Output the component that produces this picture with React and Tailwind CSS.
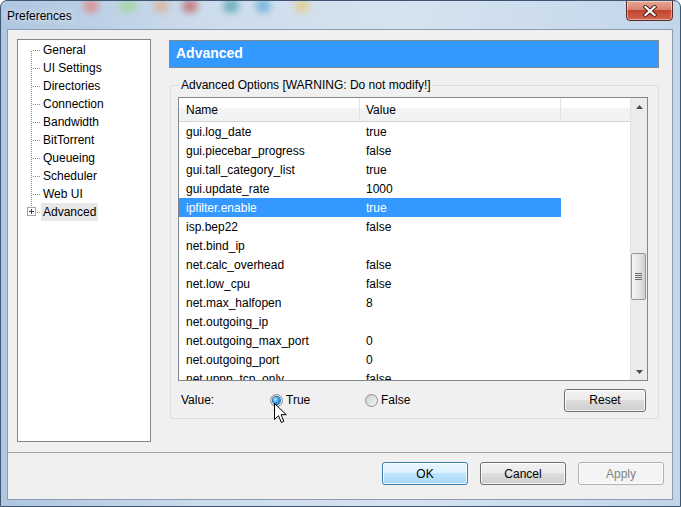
import React from 'react';

const pages = [
    'General',
    'UI Settings',
    'Directories',
    'Connection',
    'Bandwidth',
    'BitTorrent',
    'Queueing',
    'Scheduler',
    'Web UI',
    'Advanced',
];

const settings = [
    ['gui.log_date', 'true'],
    ['gui.piecebar_progress', 'false'],
    ['gui.tall_category_list', 'true'],
    ['gui.update_rate', '1000'],
    ['ipfilter.enable', 'true'],
    ['isp.bep22', 'false'],
    ['net.bind_ip', ''],
    ['net.calc_overhead', 'false'],
    ['net.low_cpu', 'false'],
    ['net.max_halfopen', '8'],
    ['net.outgoing_ip', ''],
    ['net.outgoing_max_port', '0'],
    ['net.outgoing_port', '0'],
    ['net.upnp_tcp_only', 'false'],
];

// blurred taskbar shapes showing through the glass frame
const glassSpots = [
    { left: 82, color: '#e08c8c' },
    { left: 119, color: '#9fd99a' },
    { left: 152, color: '#d9b49c' },
    { left: 181, color: '#c46f72' },
    { left: 222, color: '#5fa8b5' },
    { left: 254, color: '#6fb0dc' },
    { left: 293, color: '#e4cf8e' },
];

function TreeLines({ first, last }) {
    return (
        <svg width="23" height="18" className="shrink-0">
            {!last && (
                <line x1="13.5" y1={first ? 10 : 0} x2="13.5" y2="18" stroke="#8c8c8c" strokeDasharray="1 1" />
            )}
            {last ? (
                <>
                    <line x1="13.5" y1="0" x2="13.5" y2="4" stroke="#8c8c8c" strokeDasharray="1 1" />
                    <rect x="9.5" y="4.5" width="8" height="8" fill="#fff" stroke="#a6a6a6" />
                    <line x1="11" y1="8.5" x2="16" y2="8.5" stroke="#3b3b3b" />
                    <line x1="13.5" y1="6" x2="13.5" y2="11" stroke="#3b3b3b" />
                    <line x1="19" y1="9.5" x2="23" y2="9.5" stroke="#8c8c8c" strokeDasharray="1 1" />
                </>
            ) : (
                <line x1="15" y1="9.5" x2="23" y2="9.5" stroke="#8c8c8c" strokeDasharray="1 1" />
            )}
        </svg>
    );
}

function Radio({ checked }) {
    return (
        <span className="w-[13px] h-[13px] rounded-full border border-[#8e8f8f] bg-[linear-gradient(135deg,#cfcfcf,#f6f6f6)] flex items-center justify-center shrink-0">
            {checked && (
                <span className="w-[7px] h-[7px] rounded-full bg-[radial-gradient(circle_at_35%_35%,#b6ecff,#2590de_55%,#0f5aa8)] shadow-[0_0_0_1px_#1c6cb5]" />
            )}
        </span>
    );
}

function WinButton({ children, variant = 'normal', className = '' }) {
    const styles = {
        normal: 'border-[#707070] bg-[linear-gradient(#f2f2f2_0%,#ebebeb_50%,#dddddd_50%,#cfcfcf_100%)] text-black',
        focused: 'border-[#3c7fb1] bg-[linear-gradient(#eaf6fd_0%,#d9f0fc_50%,#bee6fd_50%,#a7d9f5_100%)] text-black',
        disabled: 'border-[#adb2b5] bg-[#f4f4f4] text-[#838383]',
    };
    return (
        <button
            type="button"
            className={`h-[23px] border rounded-[3px] shadow-[inset_0_0_0_1px_rgba(255,255,255,0.75)] text-[12px] leading-none ${styles[variant]} ${className}`}
        >
            {children}
        </button>
    );
}

function ScrollArrow({ down }) {
    return (
        <div className="h-[17px] flex items-center justify-center">
            <svg width="7" height="4">
                <path d={down ? 'M0 0 L7 0 L3.5 4 Z' : 'M0 4 L7 4 L3.5 0 Z'} fill="#4d4d4d" />
            </svg>
        </div>
    );
}

function SettingsList() {
    return (
        <div className="ml-[7px] w-[470px] h-[284px] border border-[#828790] bg-white flex overflow-hidden">
            <div className="flex-1 flex flex-col overflow-hidden">
                <div className="h-[24px] shrink-0 flex border-b border-[#d5d5d5] bg-[linear-gradient(#ffffff_0%,#ffffff_45%,#f3f4f6_45%,#f1f2f4_100%)]">
                    <div className="w-[181px] pl-[7px] pt-[2px] leading-[21px] border-r border-[#e3e4e6]">Name</div>
                    <div className="w-[201px] pl-[6px] pt-[2px] leading-[21px] border-r border-[#e3e4e6]">Value</div>
                    <div className="flex-1" />
                </div>
                {settings.map(([name, value]) => {
                    const selected = name === 'ipfilter.enable';
                    return (
                        <div
                            key={name}
                            className={`w-[382px] h-[19px] shrink-0 flex pt-px leading-[18px] ${selected ? 'bg-[#3399ff] text-white' : ''}`}
                        >
                            <div className="w-[181px] pl-[7px] whitespace-nowrap">{name}</div>
                            <div className="w-[201px] pl-[6px]">{value}</div>
                        </div>
                    );
                })}
            </div>
            <div className="w-[17px] shrink-0 bg-[#ececec] border-l border-[#e2e2e2] flex flex-col">
                <ScrollArrow />
                <div className="flex-1 pt-[138px]">
                    <div className="w-[15px] h-[47px] rounded-[2px] border border-[#979797] bg-[linear-gradient(90deg,#f4f4f4,#e6e6e6_50%,#cfcfcf)] flex flex-col items-center justify-center gap-[1px]">
                        {[0, 1, 2, 3].map((i) => (
                            <span key={i} className="w-[7px] h-px bg-[#6d6d6d]" />
                        ))}
                    </div>
                </div>
                <ScrollArrow down />
            </div>
        </div>
    );
}

export default function App() {
    return (
        <div className="relative w-[681px] h-[507px] overflow-hidden rounded-t-[7px] border border-[#3f5673] bg-[linear-gradient(90deg,#aec6e0,#cddcec_30%,#d6e3f0_60%,#c2d6ea)] pt-[28px] pl-[6px] pr-[7px] pb-[6px] font-['Liberation_Sans',Arial,sans-serif] text-[12px] text-black">
            {glassSpots.map((s) => (
                <span
                    key={s.left}
                    className="absolute top-[-2px] w-[16px] h-[14px] rounded-full blur-[3px] opacity-80"
                    style={{ left: s.left, backgroundColor: s.color }}
                />
            ))}

            <div className="absolute left-[6px] top-[8px] leading-[14px] [text-shadow:0_0_6px_#ffffff]">Preferences</div>

            <div className="absolute top-[-1px] right-[7px] w-[47px] h-[21px] rounded-b-[4px] border border-[#5b2a22] bg-[linear-gradient(#e7a796_0%,#d88371_45%,#c4452f_50%,#d2654f_100%)] shadow-[inset_0_0_0_1px_rgba(255,255,255,0.45)] flex items-center justify-center">
                <svg width="14" height="12" viewBox="0 0 14 12">
                    <path d="M2.5 2 L11.5 10 M11.5 2 L2.5 10" stroke="#4a1d18" strokeWidth="4" strokeLinecap="square" />
                    <path d="M2.5 2 L11.5 10 M11.5 2 L2.5 10" stroke="#ffffff" strokeWidth="2.2" strokeLinecap="square" />
                </svg>
            </div>

            <div className="w-full h-full border border-[#8d9bb0] bg-[#f0f0f0] flex flex-col">
                <div className="flex pl-[9px] pt-[9px]">
                    <div className="w-[134px] h-[403px] shrink-0 border border-[#828790] bg-white pt-[1px]">
                        {pages.map((page, i) => (
                            <div key={page} className="h-[18px] flex items-center">
                                <TreeLines first={i === 0} last={i === pages.length - 1} />
                                <span
                                    className={`px-[2px] h-[18px] leading-[18px] ${page === 'Advanced' ? 'bg-[#e8e8e8]' : ''}`}
                                >
                                    {page}
                                </span>
                            </div>
                        ))}
                    </div>

                    <div className="ml-[18px] w-[490px] pt-[1px]">
                        <div className="h-[28px] border border-[#7e8792] bg-[#3399ff] pl-[6px] text-white font-bold text-[14px] leading-[25px]">
                            Advanced
                        </div>

                        <div className="relative ml-[1px] mt-[17px] w-[489px] h-[334px] border border-[#d5dfe5] rounded-[3px] pt-[11px]">
                            <span className="absolute -top-[8px] left-[9px] px-[1px] bg-[#f0f0f0] leading-[14px]">
                                Advanced Options [WARNING: Do not modify!]
                            </span>

                            <SettingsList />

                            <div className="ml-[7px] w-[470px] mt-[8px] h-[22px] flex items-center">
                                <span className="w-[92px] pl-[3px]">Value:</span>
                                <div className="w-[95px] flex items-center gap-[3px]">
                                    <Radio checked />
                                    <span>True</span>
                                </div>
                                <div className="flex items-center gap-[3px]">
                                    <Radio />
                                    <span>False</span>
                                </div>
                                <WinButton className="ml-auto mr-[2px] w-[82px] h-[22px]">Reset</WinButton>
                            </div>
                        </div>
                    </div>
                </div>

                <div className="mt-[10px] h-px bg-[#a0a0a0]" />

                <div className="flex justify-end gap-[12px] pr-[8px] pt-[9px]">
                    <WinButton variant="focused" className="w-[86px]">OK</WinButton>
                    <WinButton className="w-[86px]">Cancel</WinButton>
                    <WinButton variant="disabled" className="w-[86px]">Apply</WinButton>
                </div>
            </div>

            <svg width="14" height="21" className="absolute left-[273px] top-[402px]">
                <path
                    d="M0.5 0.5 L0.5 16.5 L4.5 12.7 L7.3 19.5 L9.8 18.4 L7.1 11.7 L12.3 11.7 Z"
                    fill="#ffffff"
                    stroke="#000000"
                    strokeLinejoin="miter"
                />
            </svg>
        </div>
    );
}
